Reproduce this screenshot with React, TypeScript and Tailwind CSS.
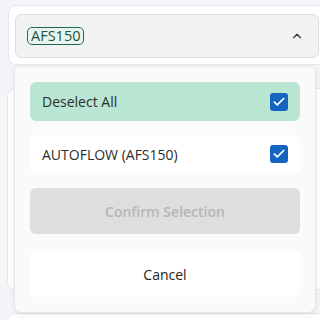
import { ChevronUp, Check } from 'lucide-react';

const FONT = { fontFamily: '"Open Sans", "Noto Sans", sans-serif' };

function CheckBox() {
  return (
    <span className="flex h-[18px] w-[18px] items-center justify-center rounded-[3px] bg-[#1565c0]">
      <Check className="h-[14px] w-[14px] text-white" strokeWidth={3} />
    </span>
  );
}

function OptionRow({ label, active }: { label: string; active?: boolean }) {
  return (
    <div
      className={`flex items-center justify-between rounded-md px-3 ${
        active ? 'h-[39px] bg-[#b9e6d3]' : 'h-[38px] bg-white'
      }`}
    >
      <span className="text-[14px] text-[#2d2d2d]">{label}</span>
      <CheckBox />
    </div>
  );
}

export default function App() {
  return (
    <div className="relative h-[320px] w-[320px] overflow-hidden bg-[#f3f5f8]" style={FONT}>
      <div className="flex flex-col gap-[23px] pl-[7px] pt-[5px]">
        {/* select card */}
        <div className="ml-px w-[330px] rounded-lg border border-[#e4e7ec] bg-white pb-[6px] pl-[6px] pt-[8px]">
          <div className="flex h-[44px] w-[304px] items-center justify-between rounded-md border border-[#dedede] bg-[#f2f2f2] pl-[11px] pr-[14px]">
            <span className="flex h-[18px] items-center rounded-[5px] border border-[#1e6b47] bg-[#e8f5ef] px-[3px] text-[14.5px] leading-none text-[#23533f]">
              AFS150
            </span>
            <ChevronUp className="h-[14px] w-[14px] text-[#333]" strokeWidth={2} />
          </div>
        </div>

        {/* cards behind the menu */}
        <div className="h-[202px] w-[330px] rounded-lg border border-[#e4e7ec] bg-white" />
        <div className="flex h-[60px] w-[330px] rounded-lg border border-[#e4e7ec] bg-white pl-[24px] pt-[18px]">
          <div className="flex items-start gap-3">
            <span className="h-[12px] w-[12px] rounded-full bg-[#111]" />
            <span className="text-[14px] text-[#444]">Select machines to view data</span>
          </div>
        </div>
      </div>

      {/* dropdown menu */}
      <div className="absolute left-[14px] top-[66px] flex h-[247px] w-[302px] flex-col rounded-b-lg rounded-t-sm border border-[#e6e6e6] bg-[#fafafa] px-[15px] pt-[15px] shadow-[0_2px_6px_rgba(0,0,0,0.08)]">
        <OptionRow label="Deselect All" active />
        <div className="mt-[14px]">
          <OptionRow label="AUTOFLOW (AFS150)" />
        </div>
        <button className="mt-[15px] h-[46px] rounded-md bg-[#dedede] text-[14px] font-semibold text-[#b7b7b7]">
          Confirm Selection
        </button>
        <button className="mt-[17px] h-[46px] rounded-md bg-white text-[14px] font-medium text-[#222]">
          Cancel
        </button>
      </div>
    </div>
  );
}
